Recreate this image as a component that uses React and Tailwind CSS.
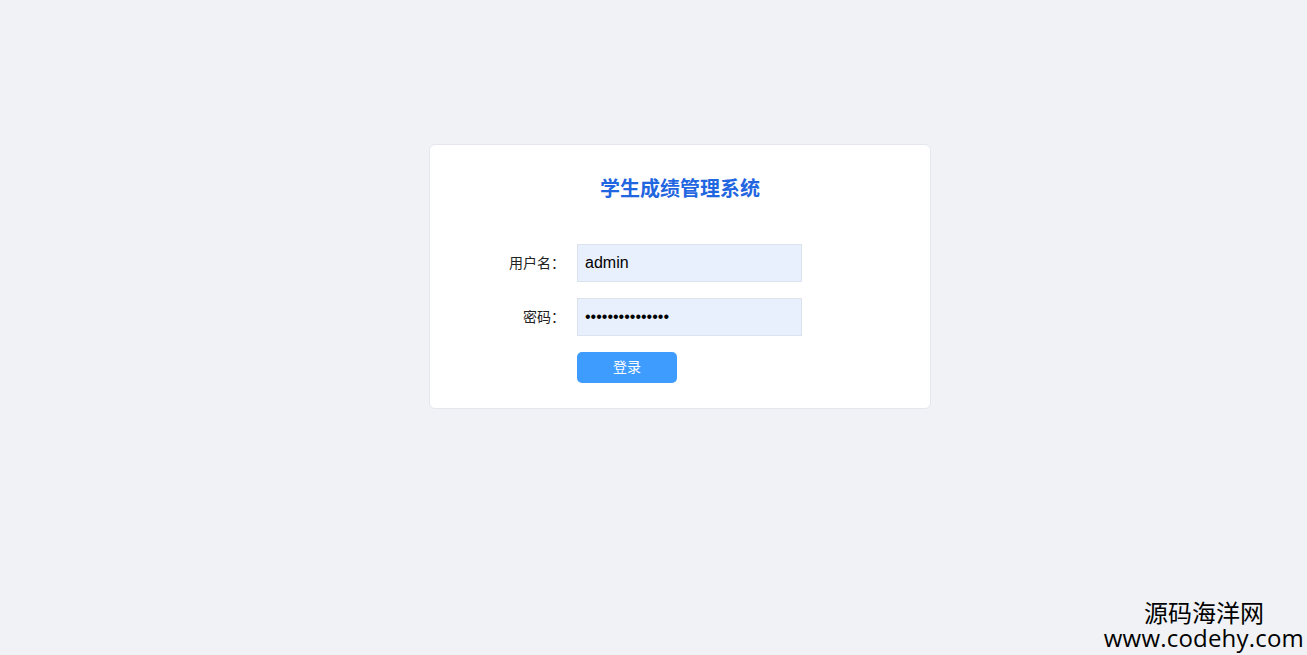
import React from "react";

export default function App() {
  return (
    <div
      className="relative h-[655px] w-full overflow-hidden bg-[#f0f2f5]"
      style={{ fontFamily: '"Liberation Sans", Arial, "Noto Sans CJK SC", sans-serif' }}
    >
      <div className="ml-[429px] mt-[144px] w-[502px] rounded-[6px] border border-[#e4e7ed] bg-white pb-[25px] pt-[30px]">
        <h1 className="text-center text-[20px] font-bold leading-[28px] text-[#1f66e0]">
          学生成绩管理系统
        </h1>
        <div className="mt-[41px] flex flex-col gap-[16px]">
          <div className="flex items-center">
            <label className="w-[147px] pr-[12px] text-right text-[14px] text-[#222]">用户名：</label>
            <input
              readOnly
              value="admin"
              className="h-[38px] w-[225px] border border-[#dde3ec] bg-[#e8f0fe] px-[7px] text-[16px] text-black outline-none"
            />
          </div>
          <div className="flex items-center">
            <label className="w-[147px] pr-[12px] text-right text-[14px] text-[#222]">密码：</label>
            <input
              readOnly
              type="password"
              value="123456789012345"
              className="h-[38px] w-[225px] border border-[#dde3ec] bg-[#e8f0fe] px-[7px] text-[16px] text-black outline-none"
            />
          </div>
          <div className="flex">
            <div className="w-[147px]" />
            <button className="h-[31px] w-[100px] rounded-[5px] bg-[#3d9cfd] text-[14px] text-white">
              登录
            </button>
          </div>
        </div>
      </div>
      <div
        className="absolute bottom-[5px] right-[3px] flex flex-col items-center gap-[1px] leading-[24px] text-black"
        style={{ fontFamily: '"Open Sans", "Noto Sans CJK SC", sans-serif' }}
      >
        <span className="text-[24px]">源码海洋网</span>
        <span className="text-[24px] tracking-[0.2px]">www.codehy.com</span>
      </div>
    </div>
  );
}
